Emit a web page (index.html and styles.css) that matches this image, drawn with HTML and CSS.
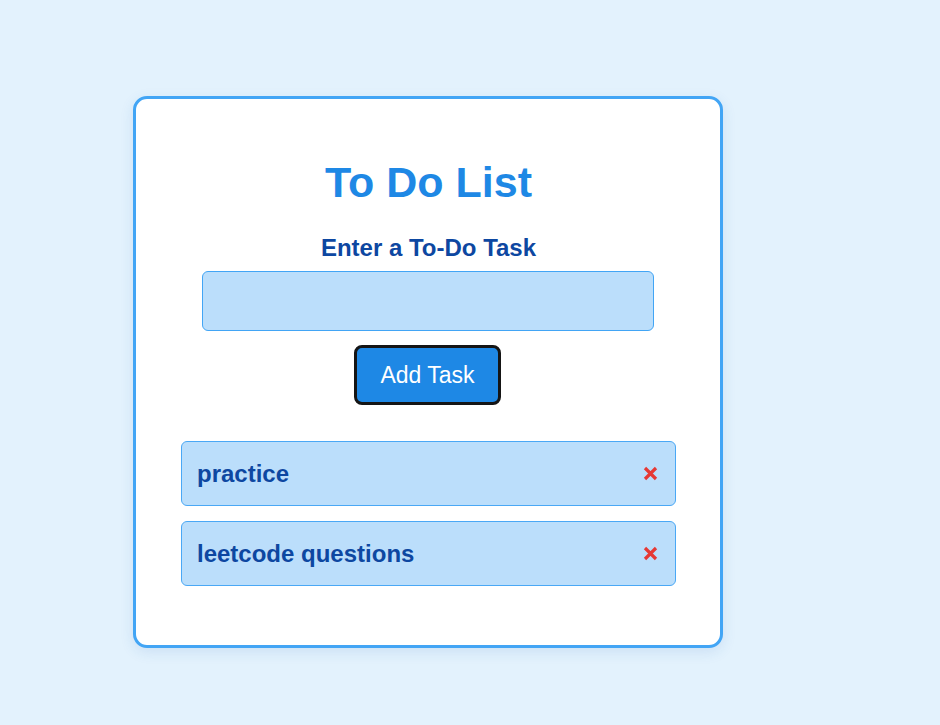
FILE: index.html
```html
<!DOCTYPE html>
<html lang="en">
<head>
<meta charset="utf-8">
<title>To Do List</title>
<link rel="stylesheet" href="styles.css">
</head>
<body>
<div class="page">
  <div class="card">
    <h1 class="title">To Do List</h1>
    <label class="label" for="task">Enter a To-Do Task</label>
    <input class="task-input" id="task" type="text">
    <button class="add-btn" type="button">Add Task</button>
    <ul class="list">
      <li class="item"><span class="item-text">practice</span><span class="remove"><svg width="15" height="15" viewBox="0 0 15 15"><path d="M2 2L13 13M13 2L2 13" stroke="#e53935" stroke-width="3.2" stroke-linecap="butt"/></svg></span></li>
      <li class="item"><span class="item-text">leetcode questions</span><span class="remove"><svg width="15" height="15" viewBox="0 0 15 15"><path d="M2 2L13 13M13 2L2 13" stroke="#e53935" stroke-width="3.2" stroke-linecap="butt"/></svg></span></li>
    </ul>
  </div>
</div>
</body>
</html>
```

FILE: styles.css
```css
html, body {
  margin: 0;
  padding: 0;
  background: #e3f2fd;
  font-family: "Liberation Sans", Arial, sans-serif;
}

.page {
  padding: 96px 0 0 133px;
  min-height: 725px;
  box-sizing: border-box;
}

.card {
  width: 590px;
  box-sizing: border-box;
  background: #ffffff;
  border: 3px solid #42a5f5;
  border-radius: 14px;
  box-shadow: 0 4px 14px rgba(30, 100, 180, 0.12);
  padding: 59px 44px 59px 45px;
  display: flex;
  flex-direction: column;
  align-items: center;
}

.title {
  margin: 0;
  font-size: 43px;
  line-height: 48px;
  font-weight: bold;
  color: #1e88e5;
}

.label {
  margin-top: 28px;
  font-size: 24px;
  line-height: 28px;
  font-weight: bold;
  color: #0d47a1;
}

.task-input {
  margin: 9px 2px 0 0;
  width: 452px;
  height: 60px;
  box-sizing: border-box;
  background: #bbdefb;
  border: 1px solid #42a5f5;
  border-radius: 6px;
  outline: none;
  font-family: inherit;
  font-size: 20px;
  padding: 0 12px;
}

.add-btn {
  margin: 14px 2px 0 0;
  width: 147px;
  height: 60px;
  box-sizing: border-box;
  background: #1e88e5;
  color: #ffffff;
  border: 3px solid #151515;
  border-radius: 8px;
  font-family: inherit;
  font-size: 23px;
  padding: 0;
}

.list {
  list-style: none;
  margin: 36px 0 0 0;
  padding: 0;
  width: 495px;
  display: flex;
  flex-direction: column;
  gap: 15px;
}

.item {
  height: 65px;
  box-sizing: border-box;
  background: #bbdefb;
  border: 1px solid #4aa8f5;
  border-radius: 6px;
  padding: 0 17px 0 15px;
  display: flex;
  align-items: center;
  justify-content: space-between;
}

.item-text {
  font-size: 24px;
  font-weight: bold;
  color: #0d47a1;
}

.remove {
  display: flex;
  width: 15px;
  height: 15px;
}
```
